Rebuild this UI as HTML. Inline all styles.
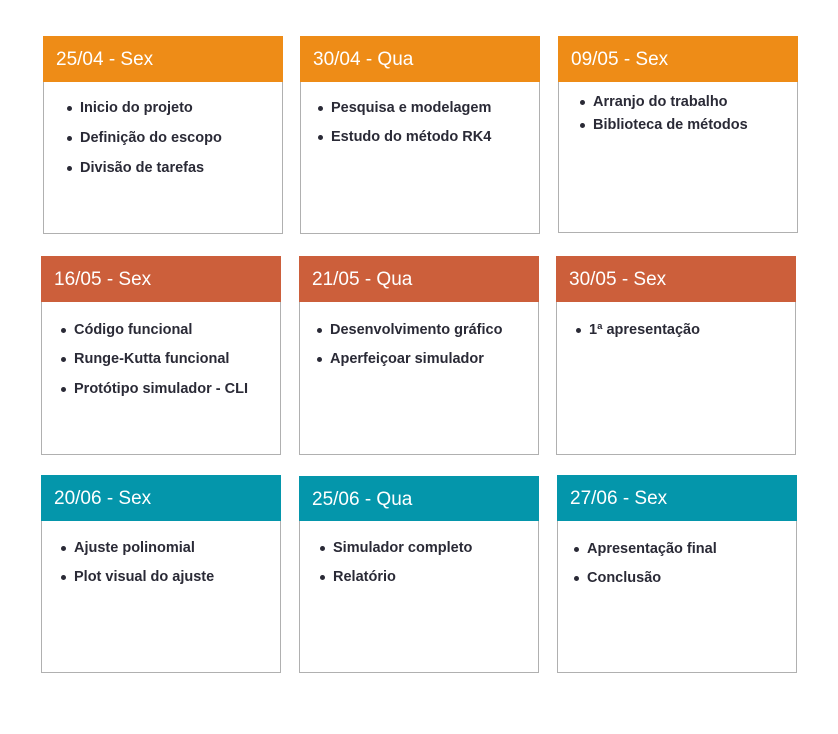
<!DOCTYPE html><html><head><meta charset="utf-8"><style>
body{margin:0;width:838px;height:734px;background:#fff;position:relative;font-family:"Liberation Sans",sans-serif;overflow:hidden}
.c{position:absolute;box-sizing:border-box;border:1px solid #b0b0b0;background:#fff;width:240px}
.h{position:absolute;left:-1px;right:-1px;top:-1px;height:46px;color:#fff;font-size:19px;line-height:48px;padding-left:13px;box-sizing:border-box}
.o{background:#ee8c17}.r{background:#cc5f3b}.t{background:#0496ab}
.i{position:absolute;font-size:14.5px;font-weight:bold;color:#2a2a36;line-height:20px;white-space:nowrap;margin-top:2px}
.i:before{content:"";position:absolute;left:-13px;top:8px;width:5px;height:5px;border-radius:50%;background:#2a2a36}
</style></head><body>
<div class="c" style="left:43px;top:36px;height:198px"><div class="h o">25/04 - Sex</div>
<div class="i" style="left:36px;top:59px">Inicio do projeto</div><div class="i" style="left:36px;top:89px">Definição do escopo</div><div class="i" style="left:36px;top:119px">Divisão de tarefas</div></div>
<div class="c" style="left:300px;top:36px;height:198px"><div class="h o">30/04 - Qua</div>
<div class="i" style="left:30px;top:59px">Pesquisa e modelagem</div><div class="i" style="left:30px;top:88px">Estudo do método RK4</div></div>
<div class="c" style="left:558px;top:36px;height:197px"><div class="h o">09/05 - Sex</div>
<div class="i" style="left:34px;top:53px">Arranjo do trabalho</div><div class="i" style="left:34px;top:76px">Biblioteca de métodos</div></div>

<div class="c" style="left:41px;top:256px;height:199px"><div class="h r">16/05 - Sex</div>
<div class="i" style="left:32px;top:61px">Código funcional</div><div class="i" style="left:32px;top:90px">Runge-Kutta funcional</div><div class="i" style="left:32px;top:120px">Protótipo simulador - CLI</div></div>
<div class="c" style="left:299px;top:256px;height:199px"><div class="h r">21/05 - Qua</div>
<div class="i" style="left:30px;top:61px">Desenvolvimento gráfico</div><div class="i" style="left:30px;top:90px">Aperfeiçoar simulador</div></div>
<div class="c" style="left:556px;top:256px;height:199px"><div class="h r">30/05 - Sex</div>
<div class="i" style="left:32px;top:61px">1ª apresentação</div></div>

<div class="c" style="left:41px;top:475px;height:198px"><div class="h t">20/06 - Sex</div>
<div class="i" style="left:32px;top:60px">Ajuste polinomial</div><div class="i" style="left:32px;top:89px">Plot visual do ajuste</div></div>
<div class="c" style="left:299px;top:476px;height:197px"><div class="h t" style="height:45px">25/06 - Qua</div>
<div class="i" style="left:33px;top:59px">Simulador completo</div><div class="i" style="left:33px;top:88px">Relatório</div></div>
<div class="c" style="left:557px;top:475px;height:198px"><div class="h t">27/06 - Sex</div>
<div class="i" style="left:29px;top:61px">Apresentação final</div><div class="i" style="left:29px;top:90px">Conclusão</div></div>
</body></html>
